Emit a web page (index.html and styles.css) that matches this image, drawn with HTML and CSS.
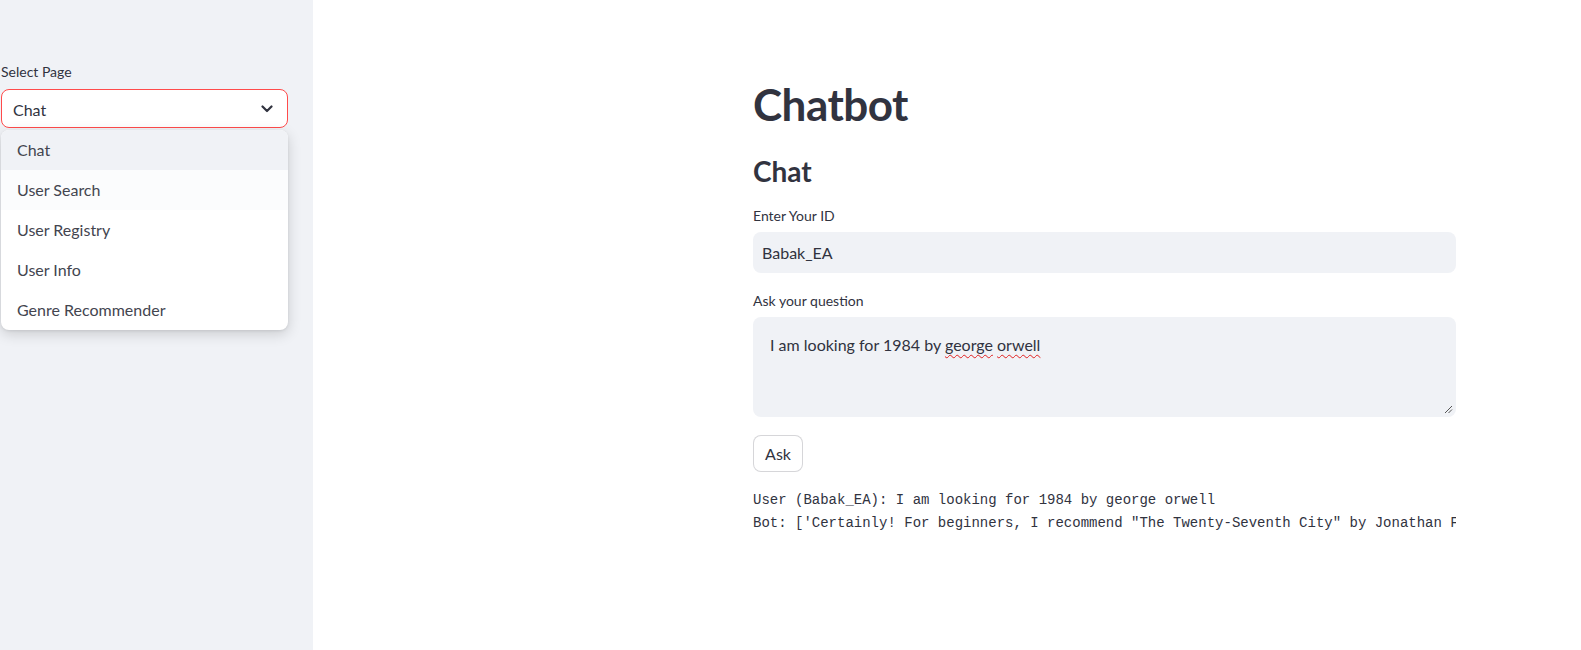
FILE: index.html
```html
<!DOCTYPE html>
<html lang="en">
<head>
<meta charset="utf-8">
<title>Chatbot</title>
<link rel="stylesheet" href="styles.css">
</head>
<body>
<div class="app">
  <aside class="sidebar">
    <div class="sb-label">Select Page</div>
    <div class="select-wrap">
      <div class="select">
        <span class="select-value">Chat</span>
        <svg class="chev" width="12" height="8" viewBox="0 0 12 8"><path d="M1.5 1.5 L6 6 L10.5 1.5" fill="none" stroke="#31333f" stroke-width="2.2" stroke-linecap="round" stroke-linejoin="round"/></svg>
      </div>
      <ul class="menu">
        <li class="item active">Chat</li>
        <li class="item hover">User Search</li>
        <li class="item">User Registry</li>
        <li class="item">User Info</li>
        <li class="item">Genre Recommender</li>
      </ul>
    </div>
  </aside>
  <main class="main">
    <h1 class="title">Chatbot</h1>
    <h2 class="subtitle">Chat</h2>
    <div class="field">
      <div class="label">Enter Your ID</div>
      <div class="input">Babak_EA</div>
    </div>
    <div class="field field2">
      <div class="label">Ask your question</div>
      <div class="textarea"><span>I am looking for 1984 by <span class="sp">george</span> <span class="sp">orwell</span></span>
        <svg class="grip" width="9" height="9" viewBox="0 0 9 9"><path d="M8 1 L1 8 M8 4.5 L4.5 8" stroke="#555" stroke-width="1"/></svg>
      </div>
    </div>
    <button class="btn">Ask</button>
    <div class="log">
      <div class="line">User (Babak_EA): I am looking for 1984 by george orwell</div>
      <div class="line">Bot: ['Certainly! For beginners, I recommend "The Twenty-Seventh City" by Jonathan F</div>
    </div>
  </main>
</div>
</body>
</html>
```
FILE: styles.css
```css
* { box-sizing: border-box; }
html, body { margin: 0; padding: 0; }
body {
  font-family: Lato, "Noto Sans", sans-serif;
  color: #31333f;
  background: #fff;
  overflow: hidden;
}
.app {
  display: flex;
  height: 650px;
}
.sidebar {
  width: 313px;
  flex: none;
  background: #f0f2f6;
  padding: 62px 25px 0 1px;
}
.sb-label {
  font-size: 14px;
  line-height: 20px;
  margin-bottom: 7px;
}
.select-wrap { position: relative; }
.select {
  height: 39px;
  border: 1px solid #ff4b4b;
  border-radius: 8px;
  background: #fff;
  display: flex;
  align-items: center;
  justify-content: space-between;
  padding: 1px 14px 0 11px;
  font-size: 16px;
}
.chev { display: block; }
.menu {
  position: absolute;
  left: 0;
  right: 0;
  top: 41px;
  margin: 0;
  padding: 0;
  list-style: none;
  background: #fff;
  border-radius: 8px;
  overflow: hidden;
  box-shadow: 0 4px 14px rgba(0,0,0,0.16), 0 1px 3px rgba(0,0,0,0.08);
  z-index: 5;
}
.item {
  height: 40px;
  line-height: 40px;
  padding-left: 16px;
  font-size: 16px;
  color: #43454f;
}
.item.active { background: #f0f2f6; }
.item.hover { background: #fbfcfd; }
.main {
  flex: 1;
  padding: 78px 0 0 440px;
  min-width: 0;
}
.main > * { width: 703px; }
.title {
  margin: 0;
  font-size: 44px;
  line-height: 52px;
  font-weight: 700;
  letter-spacing: -0.5px;
}
.subtitle {
  margin: 23px 0 0;
  font-size: 28px;
  line-height: 36px;
  font-weight: 700;
}
.field { margin-top: 17px; }
.field2 { margin-top: 18px; }
.label {
  font-size: 14px;
  line-height: 20px;
  margin-bottom: 6px;
}
.input {
  height: 41px;
  background: #f0f2f6;
  border-radius: 8px;
  display: flex;
  align-items: center;
  padding-left: 9px;
  font-size: 16px;
}
.textarea {
  position: relative;
  height: 100px;
  background: #f0f2f6;
  border-radius: 8px;
  padding: 16px 16px 16px 17px;
  font-size: 16px;
  line-height: 24px;
}
.sp {
  text-decoration: underline wavy #e02020;
  text-decoration-thickness: 1px;
  text-underline-offset: 3px;
}
.grip {
  position: absolute;
  right: 3px;
  bottom: 3px;
}
.btn {
  display: block;
  width: 50px !important;
  height: 37px;
  margin-top: 18px;
  background: #fff;
  border: 1px solid rgba(49,51,63,0.2);
  border-radius: 8px;
  font-family: Lato, "Noto Sans", sans-serif;
  font-size: 16px;
  color: #31333f;
  padding: 0;
}
.log {
  margin-top: 17px;
  overflow: hidden;
  font-family: "Liberation Mono", "DejaVu Sans Mono", monospace;
  font-size: 14px;
  line-height: 23px;
}
.line { white-space: pre; }
```
